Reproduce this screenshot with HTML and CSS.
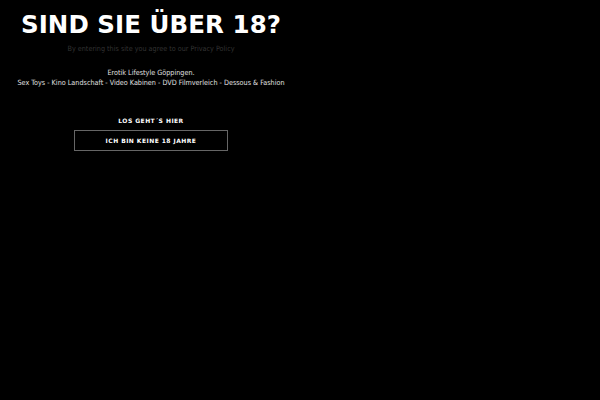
FILE: index.html
```html
<!DOCTYPE html>
<html lang="de">
<head>
<meta charset="utf-8">
<title>Altersprüfung</title>
<link rel="stylesheet" href="styles.css">
</head>
<body>
<div class="gate">
  <h1 class="title">SIND SIE ÜBER 18?</h1>
  <p class="policy">By entering this site you agree to our Privacy Policy</p>
  <div class="info">
    <p>Erotik Lifestyle Göppingen.</p>
    <p>Sex Toys - Kino Landschaft - Video Kabinen - DVD Filmverleich - Dessous &amp; Fashion</p>
  </div>
  <a class="enter" href="#">LOS GEHT´S HIER</a>
  <a class="leave" href="#">ICH BIN KEINE 18 JAHRE</a>
</div>
</body>
</html>
```
FILE: styles.css
```css
html, body {
  margin: 0;
  padding: 0;
  background: #000;
  height: 100%;
}
body {
  font-family: "DejaVu Sans", sans-serif;
  color: #fff;
}
.gate {
  width: 302px;
  display: flex;
  flex-direction: column;
  align-items: center;
  text-align: center;
  padding-top: 10px;
}
.title {
  margin: 0;
  font-size: 24.5px;
  font-weight: bold;
  line-height: 30px;
  letter-spacing: 0.05px;
}
.policy {
  margin: 4px 0 0;
  font-family: "DejaVu Sans Condensed", "DejaVu Sans", sans-serif;
  font-size: 7.2px;
  line-height: 10px;
  color: #333;
}
.info {
  margin-top: 14px;
  font-family: "DejaVu Sans Condensed", "DejaVu Sans", sans-serif;
  font-size: 7.2px;
  line-height: 10px;
  color: #e0e0e0;
}
.info p {
  margin: 0;
}
.enter {
  margin-top: 28px;
  font-size: 6px;
  font-weight: bold;
  letter-spacing: 0.45px;
  color: #fff;
  text-decoration: none;
  line-height: 10px;
}
.leave {
  margin-top: 4px;
  width: 152px;
  height: 19px;
  border: 1px solid #666;
  display: flex;
  align-items: center;
  justify-content: center;
  font-size: 6px;
  font-weight: bold;
  letter-spacing: 0.45px;
  color: #fff;
  text-decoration: none;
}
```
